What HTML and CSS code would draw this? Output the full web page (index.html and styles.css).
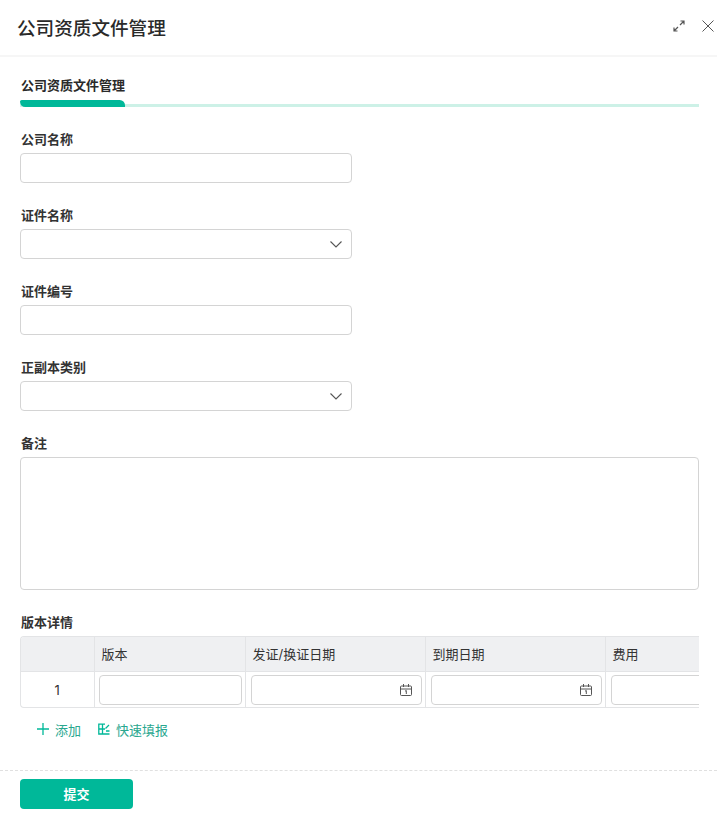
FILE: index.html
```html
<!DOCTYPE html>
<html lang="zh-CN">
<head>
    <meta charset="UTF-8">
    <meta name="viewport" content="width=device-width, initial-scale=1.0">
    <title>公司资质文件管理</title>
    <link rel="stylesheet" href="styles.css">
</head>
<body>
    <div class="dialog">
        <header class="dialog-header">
            <h1>公司资质文件管理</h1>
            <div class="header-tools">
                <svg class="icon-expand" width="12" height="12" viewBox="0 0 12 12" fill="none" stroke="#555" stroke-width="1.2">
                    <path d="M7 5 11 1M7.500 1H11V4.500M5 7 1 11M1 7.500V11H4.500"/>
                </svg>
                <svg class="icon-close" width="12" height="12" viewBox="0 0 12 12" fill="none" stroke="#555" stroke-width="1">
                    <path d="M.5.500 11.500 11.500M11.500.500 .5 11.500"/>
                </svg>
            </div>
        </header>

        <main class="dialog-body">
            <div class="section-title">公司资质文件管理</div>
            <div class="section-line"><span class="section-mark"></span></div>

            <div class="form-group">
                <label>公司名称</label>
                <div class="input"></div>
            </div>
            <div class="form-group">
                <label>证件名称</label>
                <div class="input select">
                    <svg width="12" height="7" viewBox="0 0 12 7" fill="none" stroke="#555" stroke-width="1.100"><path d="M.5.500 6 6 11.500.500"/></svg>
                </div>
            </div>
            <div class="form-group">
                <label>证件编号</label>
                <div class="input"></div>
            </div>
            <div class="form-group">
                <label>正副本类别</label>
                <div class="input select">
                    <svg width="12" height="7" viewBox="0 0 12 7" fill="none" stroke="#555" stroke-width="1.100"><path d="M.5.500 6 6 11.500.500"/></svg>
                </div>
            </div>
            <div class="form-group">
                <label>备注</label>
                <div class="input textarea"></div>
            </div>

            <div class="detail">
                <label>版本详情</label>
                <div class="table-wrap">
                    <table class="table">
                        <colgroup>
                            <col class="col-no"><col class="col-version"><col class="col-date"><col class="col-date"><col class="col-date">
                        </colgroup>
                        <thead>
                            <tr><th></th><th>版本</th><th>发证/换证日期</th><th>到期日期</th><th>费用</th></tr>
                        </thead>
                        <tbody>
                            <tr>
                                <td class="row-no">1</td>
                                <td class="cell-version"><div class="input cell-input"></div></td>
                                <td>
                                    <div class="input cell-input date">
                                        <svg width="12" height="12" viewBox="0 0 12 12" fill="none" stroke="#555"><path d="M1.500 2H10.500A1 1 0 0 1 11.500 3V10.500A1 1 0 0 1 10.500 11.500H1.500A1 1 0 0 1 .5 10.500V3A1 1 0 0 1 1.500 2ZM.5 5H11.500M3.500 0V3M8.500 0V3M5 7.200 6.300 6.500V10"/></svg>
                                    </div>
                                </td>
                                <td>
                                    <div class="input cell-input date">
                                        <svg width="12" height="12" viewBox="0 0 12 12" fill="none" stroke="#555"><path d="M1.500 2H10.500A1 1 0 0 1 11.500 3V10.500A1 1 0 0 1 10.500 11.500H1.500A1 1 0 0 1 .5 10.500V3A1 1 0 0 1 1.500 2ZM.5 5H11.500M3.500 0V3M8.500 0V3M5 7.200 6.300 6.500V10"/></svg>
                                    </div>
                                </td>
                                <td><div class="input cell-input"></div></td>
                            </tr>
                        </tbody>
                    </table>
                </div>
                <div class="table-actions">
                    <a class="action">
                        <svg width="12" height="12" viewBox="0 0 12 12" fill="none" stroke="#00b899" stroke-width="1.300"><path d="M6 0V12M0 6H12"/></svg>
                        添加
                    </a>
                    <a class="action">
                        <svg width="12" height="12" viewBox="0 0 12 12" fill="none" stroke="#00b899" stroke-width="1.300"><path d="M11.500 11H.8V1.200H7M.8 6H7M4.500 1.200V11M11 2 7.500 5.500M8 8H11.500"/></svg>
                        快速填报
                    </a>
                </div>
            </div>
        </main>

        <footer class="dialog-footer">
            <button type="button" class="btn">提交</button>
        </footer>
    </div>
</body>
</html>
```

FILE: styles.css
```css
* {
    box-sizing: border-box;
}

html, body {
    height: 100%;
}

body {
    margin: 0;
    overflow: hidden;
    background-color: #fff;
    color: #333;
    font-family: Inter, "Noto Sans CJK SC", sans-serif;
    font-size: 13px;
}

.dialog {
    display: flex;
    flex-direction: column;
    height: 814px;
}

.dialog-header {
    display: flex;
    align-items: center;
    justify-content: space-between;
    height: 57px;
    padding: 0 3px 3px 17px;
    border-bottom: 2px solid #f6f6f6;
}

.dialog-header h1 {
    margin: 0;
    font-size: 18.600px;
    font-weight: 500;
    color: #2a2a2a;
}

.header-tools {
    display: flex;
    align-items: center;
    gap: 17px;
}

.dialog-body {
    flex: 1;
    padding: 17px 18px 0 20px;
}

.section-title {
    height: 22px;
    padding-left: 1px;
    font-weight: 700;
    line-height: 22px;
    color: #2a2a2a;
}

.section-line {
    display: flex;
    align-items: flex-end;
    height: 7px;
    margin-top: 4px;
    border-bottom: 3px solid #cdf1e7;
}

.section-mark {
    width: 105px;
    height: 7px;
    margin-bottom: -3px;
    background-color: #00b899;
    border-radius: 2px 6px 0 6px;
}

.form-group {
    margin-top: 21px;
    margin-bottom: 21px;
}

.form-group + .form-group {
    margin-top: 0;
}

label {
    display: block;
    height: 22px;
    margin-bottom: 3px;
    padding-left: 1px;
    font-weight: 700;
    line-height: 22px;
    color: #333;
}

.input {
    display: flex;
    align-items: center;
    justify-content: flex-end;
    width: 332px;
    height: 30px;
    padding-right: 9px;
    background-color: #fff;
    border: 1px solid #d4d4d4;
    border-radius: 4px;
}

.textarea {
    width: 679px;
    height: 133px;
}

.table-wrap {
    width: 679px;
    overflow: hidden;
    border: 1px solid #e3e4e6;
    border-right: 0;
    border-radius: 4px 0 0 4px;
}

.table {
    width: 764px;
    table-layout: fixed;
    border-collapse: collapse;
}

.col-no {
    width: 73px;
}

.col-version {
    width: 151px;
}

.col-date {
    width: 180px;
}

.table th {
    height: 34px;
    padding: 0 7px;
    background-color: #eff0f2;
    border-right: 1px solid #e3e4e6;
    border-bottom: 1px solid #e3e4e6;
    font-weight: 400;
    text-align: left;
}

.table td {
    height: 36px;
    padding: 1px 3px 0 5px;
    border-right: 1px solid #e3e4e6;
}

.table .row-no {
    padding-right: 5px;
    text-align: center;
}

.table .cell-version {
    padding-left: 4px;
}

.cell-input {
    width: 100%;
}

.table-actions {
    display: flex;
    gap: 17px;
    margin-top: 10px;
    padding-left: 17px;
}

.action {
    display: flex;
    align-items: center;
    gap: 6px;
    height: 22px;
    color: #2aa78f;
}

.dialog-footer {
    height: 44px;
    padding: 8px 20px;
    border-top: 1px dashed #e0e0e0;
}

.btn {
    display: block;
    width: 113px;
    height: 30px;
    padding: 0 0 2px;
    background-color: #00b899;
    border: 0;
    border-radius: 4px;
    color: #fff;
    font-family: inherit;
    font-size: 13px;
    font-weight: 700;
    cursor: pointer;
}
```
